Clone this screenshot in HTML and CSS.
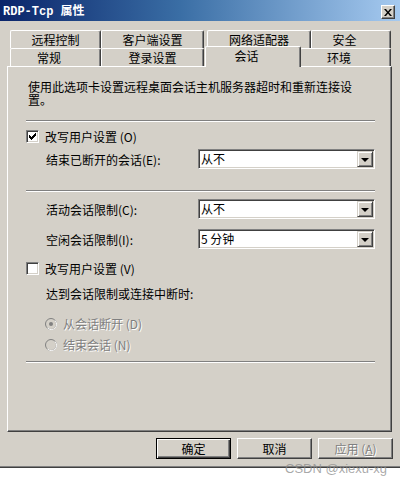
FILE: index.html
```html
<!DOCTYPE html>
<html lang="zh-CN">
<head>
<meta charset="utf-8">
<title>RDP-Tcp 属性</title>
<link rel="stylesheet" href="styles.css">
</head>
<body>
<div class="window">
  <div class="titlebar">
    <span class="title">RDP-Tcp 属性</span>
    <span class="close"><svg width="8" height="7" viewBox="0 0 8 7"><path d="M0 0h2l2 2.5L6 0h2L5 3.5 8 7H6L4 4.5 2 7H0l3-3.5z" fill="#000"/></svg></span>
  </div>
  <div class="tabs">
    <div class="tabrow">
      <div class="tab t1">远程控制</div>
      <div class="tab t2">客户端设置</div>
      <div class="tab t3">网络适配器</div>
      <div class="tab t4 short">安全</div>
    </div>
    <div class="tabrow">
      <div class="tab t1 short">常规</div>
      <div class="tab t2">登录设置</div>
      <div class="tab sel short">会话</div>
      <div class="tab t6 short">环境</div>
    </div>
  </div>
  <div class="panel">
    <div class="desc">
      <div class="dline">使用此选项卡设置远程桌面会话主机服务器超时和重新连接设</div>
      <div class="dline">置。</div>
    </div>
    <div class="sep s1"></div>
    <div class="checkrow c1">
      <span class="checkbox"><svg width="7" height="7" viewBox="0 0 7 7" shape-rendering="crispEdges"><path d="M6 0h1v1h-1z M5 1h2v1h-2z M0 2h1v1h-1z M4 2h3v1h-3z M0 3h2v1h-2z M3 3h3v1h-3z M0 4h5v1h-5z M1 5h3v1h-3z M2 6h1v1h-1z" fill="#000"/></svg></span>
      <span>改写用户设置 (O)</span>
    </div>
    <div class="field f1">
      <span class="flabel">结束已断开的会话(E):</span>
      <div class="combo"><span class="cval">从不</span><span class="cbtn"><span class="tri"></span></span></div>
    </div>
    <div class="sep s2"></div>
    <div class="field f2">
      <span class="flabel">活动会话限制(C):</span>
      <div class="combo"><span class="cval">从不</span><span class="cbtn"><span class="tri"></span></span></div>
    </div>
    <div class="field f3">
      <span class="flabel">空闲会话限制(I):</span>
      <div class="combo"><span class="cval">5 分钟</span><span class="cbtn"><span class="tri"></span></span></div>
    </div>
    <div class="checkrow c2">
      <span class="checkbox"></span>
      <span>改写用户设置 (V)</span>
    </div>
    <div class="note">达到会话限制或连接中断时:</div>
    <div class="radiorow r1">
      <svg class="radio" width="12" height="12" viewBox="0 0 12 12"><circle cx="6" cy="6" r="5.5" fill="#d4d0c8" stroke="#808080"/><path d="M10 2.5A5 5 0 0 1 2.5 10" fill="none" stroke="#fff"/><circle cx="6" cy="6" r="2" fill="#808080"/></svg>
      <span class="disabled">从会话断开 (D)</span>
    </div>
    <div class="radiorow r2">
      <svg class="radio" width="12" height="12" viewBox="0 0 12 12"><circle cx="6" cy="6" r="5.5" fill="#d4d0c8" stroke="#808080"/><path d="M10 2.5A5 5 0 0 1 2.5 10" fill="none" stroke="#fff"/></svg>
      <span class="disabled">结束会话 (N)</span>
    </div>
    <div class="sep s3"></div>
  </div>
  <div class="buttons">
    <div class="btn default">确定</div>
    <div class="btn">取消</div>
    <div class="btn"><span class="disabled">应用 (<u>A</u>)</span></div>
  </div>
</div>
<div class="watermark">CSDN @xiexu-xg</div>
</body>
</html>
```

FILE: styles.css
```css
* { box-sizing: border-box; }
html, body { margin: 0; padding: 0; }
body {
  background: #ffffff;
  font-family: "Noto Sans CJK SC", "Liberation Sans", sans-serif;
  font-size: 12px;
  color: #000;
  position: relative;
  width: 400px;
  height: 487px;
  overflow: hidden;
}
.window {
  width: 400px;
  height: 468px;
  background: #d4d0c8;
  border-bottom: 1px solid #404040;
  box-shadow: inset 0 -1px #808080;
}
.titlebar {
  height: 21px;
  background: linear-gradient(to right, #0a246a 0%, #3a6ea5 45%, #a6caf0 100%);
  display: flex;
  align-items: flex-start;
}
.title {
  color: #fff;
  font-family: "Liberation Mono", "Noto Sans CJK SC", monospace;
  font-weight: bold;
  font-size: 12px;
  line-height: 14px;
  padding: 5px 0 0 3px;
}
.close {
  margin: 5px 5px 0 auto;
  width: 14px;
  height: 14px;
  background: #d4d0c8;
  border: 1px solid;
  border-color: #fff #404040 #404040 #fff;
  box-shadow: inset -1px -1px #808080;
  display: flex;
  align-items: center;
  justify-content: center;
  padding-right: 1px;
}
.close svg { display: block; }
.tabs {
  margin-top: 9px;
  padding-left: 10px;
}
.tabrow {
  display: flex;
  height: 18px;
}
.tab {
  height: 18px;
  border-top: 1px solid #fff;
  border-left: 1px solid #fff;
  border-right: 1px solid #404040;
  box-shadow: inset -1px 0 #808080;
  border-radius: 2px 2px 0 0;
  text-align: center;
  line-height: 17px;
  background: #d4d0c8;
  white-space: nowrap;
}
.tab.short { padding-right: 13px; }
.t1 { width: 91px; }
.t2 { width: 103px; }
.t3 { width: 104px; margin-left: 3px; }
.t4 { width: 80px; }
.t6 { width: 91px; margin-left: -1px; }
.tab.sel {
  width: 96px;
  height: 21px;
  margin: -2px 0 -1px 1px;
  line-height: 18px;
  position: relative;
  z-index: 1;
}
.panel {
  margin-left: 7px;
  width: 385px;
  height: 366px;
  border: 1px solid;
  border-color: #fff #404040 #404040 #fff;
  box-shadow: inset -1px -1px #808080;
  padding: 14px 16px 0 18px;
}
.desc {
  margin-left: 2px;
}
.dline {
  height: 13px;
  line-height: 12px;
  white-space: nowrap;
}
.sep {
  height: 2px;
  border-top: 1px solid #808080;
  border-bottom: 1px solid #fff;
}
.s1 { margin-top: 13px; }
.s2 { margin-top: 21px; }
.s3 { margin-top: 10px; }
.checkrow {
  display: flex;
  align-items: center;
  height: 13px;
  line-height: 13px;
  gap: 6px;
}
.c1 { margin-top: 8px; }
.c2 { margin-top: 13px; }
.checkbox {
  width: 13px;
  height: 13px;
  flex: none;
  background: #fff;
  border: 1px solid;
  border-color: #808080 #fff #fff #808080;
  box-shadow: inset 1px 1px #404040, inset -1px -1px #d4d0c8;
  padding: 2px 0 0 2px;
}
.checkbox svg { display: block; }
.field {
  display: flex;
  align-items: center;
  height: 20px;
  padding-left: 20px;
}
.f1 { margin-top: 6px; }
.f2 { margin-top: 7px; }
.f3 { margin-top: 10px; }
.flabel { flex: 1; line-height: 13px; }
.combo {
  width: 177px;
  height: 20px;
  background: #fff;
  border: 1px solid;
  border-color: #808080 #fff #fff #808080;
  box-shadow: inset 1px 1px #404040, inset -1px -1px #d4d0c8;
  display: flex;
  align-items: center;
}
.cval {
  flex: 1;
  padding-left: 2px;
  line-height: 14px;
}
.cbtn {
  width: 16px;
  height: 16px;
  margin-right: 1px;
  align-self: center;
  background: #d4d0c8;
  border: 1px solid;
  border-color: #d4d0c8 #404040 #404040 #d4d0c8;
  box-shadow: inset 1px 1px #fff, inset -1px -1px #808080;
  display: flex;
  align-items: center;
  justify-content: center;
}
.tri {
  width: 0;
  height: 0;
  border-left: 4px solid transparent;
  border-right: 4px solid transparent;
  border-top: 4px solid #000;
  margin-top: 1px;
}
.note {
  margin-top: 12px;
  padding-left: 20px;
  line-height: 13px;
}
.radiorow {
  display: flex;
  align-items: center;
  height: 13px;
  line-height: 13px;
  padding-left: 19px;
  gap: 6px;
}
.r1 { margin-top: 17px; }
.r2 { margin-top: 8px; }
.radio { display: block; flex: none; }
.disabled {
  color: #808080;
  text-shadow: 1px 1px 0 #fff;
}
.buttons {
  margin-top: 6px;
  display: flex;
  justify-content: flex-end;
  gap: 6px;
  padding-right: 7px;
}
.btn {
  width: 75px;
  height: 21px;
  border: 1px solid;
  border-color: #fff #404040 #404040 #fff;
  box-shadow: inset -1px -1px #808080;
  display: flex;
  align-items: center;
  justify-content: center;
  line-height: 14px;
}
.btn.default {
  border: 1px solid #000;
  box-shadow: inset 1px 1px #fff, inset -1px -1px #404040, inset -2px -2px #808080;
}
.watermark {
  position: absolute;
  left: 285px;
  top: 461px;
  font-family: "Liberation Sans", sans-serif;
  font-size: 13px;
  line-height: 16px;
  color: rgba(140, 140, 140, 0.75);
}
```
